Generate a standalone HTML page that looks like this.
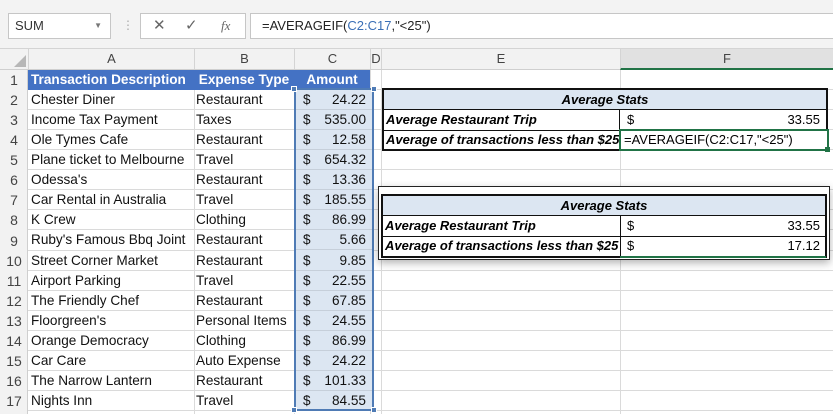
<!DOCTYPE html><html><head><style>
body{margin:0;width:833px;height:414px;overflow:hidden;background:#fff;font-family:"Liberation Sans",sans-serif;position:relative}
.a{position:absolute;box-sizing:border-box;white-space:nowrap}
.t{font-size:13px;line-height:20px}
.d{font-size:13.6px}
</style></head><body>
<div class="a" style="left:0;top:0;width:833px;height:49px;background:#f3f3f3;border-bottom:1px solid #d4d4d4"></div>
<div class="a" style="left:8px;top:13px;width:103px;height:26px;background:#fff;border:1px solid #c6c6c6;font-size:13px;line-height:24px;padding-left:6px;color:#333">SUM<span style="position:absolute;right:8px;top:0;font-size:8px;color:#777">▼</span></div>
<div class="a" style="left:122px;top:18px;color:#aaa;font-size:12px">⋮</div>
<div class="a" style="left:140px;top:13px;width:106px;height:26px;background:#fff;border:1px solid #c6c6c6;font-size:15px;line-height:24px;color:#666"><span style="position:absolute;left:12px">✕</span><span style="position:absolute;left:44px">✓</span><span style="position:absolute;left:80px;font-family:'Liberation Serif';font-style:italic;font-size:13px">fx</span></div>
<div class="a" style="left:250px;top:13px;width:590px;height:26px;background:#fff;border:1px solid #c6c6c6;font-size:13px;line-height:24px;padding-left:11px;color:#222">=AVERAGEIF(<span style="color:#3a6fb6">C2:C17</span>,"&lt;25")</div>
<div class="a" style="left:0;top:49px;width:833px;height:21px;background:#f2f2f2;border-bottom:1px solid #cfcfcf"></div>
<div class="a" style="left:14px;top:55px;width:0;height:0;border-left:12px solid transparent;border-bottom:12px solid #b7b7b7"></div>
<div class="a t" style="left:28px;top:49px;width:166px;text-align:center;border-left:1px solid #d4d4d4;color:#444">A</div>
<div class="a t" style="left:194px;top:49px;width:100px;text-align:center;border-left:1px solid #d4d4d4;color:#444">B</div>
<div class="a t" style="left:294px;top:49px;width:76px;text-align:center;border-left:1px solid #d4d4d4;color:#444">C</div>
<div class="a t" style="left:370px;top:49px;width:11px;text-align:center;border-left:1px solid #d4d4d4;color:#444">D</div>
<div class="a t" style="left:381px;top:49px;width:239px;text-align:center;border-left:1px solid #d4d4d4;color:#444">E</div>
<div class="a t" style="left:620px;top:49px;width:213px;text-align:center;border-left:1px solid #d4d4d4;color:#444;background:#e1e1e1;border-bottom:2px solid #217346;height:21px">F</div>
<div class="a" style="left:0;top:70px;width:28px;height:344px;background:#f2f2f2;border-right:1px solid #cfcfcf"></div>
<div id="g"></div>
<script>
var rows=[["Chester Diner","Restaurant","24.22"],["Income Tax Payment","Taxes","535.00"],["Ole Tymes Cafe","Restaurant","12.58"],["Plane ticket to Melbourne","Travel","654.32"],["Odessa's","Restaurant","13.36"],["Car Rental in Australia","Travel","185.55"],["K Crew","Clothing","86.99"],["Ruby's Famous Bbq Joint","Restaurant","5.66"],["Street Corner Market","Restaurant","9.85"],["Airport Parking","Travel","22.55"],["The Friendly Chef","Restaurant","67.85"],["Floorgreen's","Personal Items","24.55"],["Orange Democracy","Clothing","86.99"],["Car Care","Auto Expense","24.22"],["The Narrow Lantern","Restaurant","101.33"],["Nights Inn","Travel","84.55"]];
var h="";
for(var i=0;i<17;i++){var y=70+i*20.07;
h+='<div class="a" style="left:28px;top:'+(y+19)+'px;width:805px;height:1px;background:#dadada"></div>';
h+='<div class="a t" style="left:0;top:'+y+'px;width:28px;text-align:center;color:#444;font-size:14px">'+(i+1)+'</div>';}
[194,294,370,381,620].forEach(function(x){h+='<div class="a" style="left:'+x+'px;top:70px;width:1px;height:344px;background:#dadada"></div>'});
h+='<div class="a" style="left:28px;top:70px;width:342px;height:20px;background:#4472c4"></div>';
h+='<div class="a t d" style="left:31px;top:70px;color:#fff;font-weight:bold">Transaction Description</div>';
h+='<div class="a t d" style="left:194px;top:70px;width:100px;text-align:center;color:#fff;font-weight:bold">Expense Type</div>';
h+='<div class="a t d" style="left:294px;top:70px;width:76px;text-align:center;color:#fff;font-weight:bold">Amount</div>';
h+='<div class="a" style="left:294px;top:89px;width:79px;height:322px;background:#dce6f2"></div>';
for(var i=0;i<16;i++){var y=90+i*20.07;var r=rows[i];
h+='<div class="a" style="left:294px;top:'+(y+19)+'px;width:79px;height:1px;background:#c6cfda"></div>';
h+='<div class="a t d" style="left:31px;top:'+y+'px;color:#111">'+r[0]+'</div>';
h+='<div class="a t d" style="left:196px;top:'+y+'px;color:#111">'+r[1]+'</div>';
h+='<div class="a t d" style="left:303px;top:'+y+'px;color:#111">$</div>';
h+='<div class="a t d" style="left:300px;top:'+y+'px;width:66px;text-align:right;color:#111">'+r[2]+'</div>';}
document.getElementById("g").innerHTML=h;
</script>
<div class="a" style="left:294px;top:88px;width:80px;height:323px;border:2px solid #4f7bb5"></div>
<div class="a" style="left:291px;top:86px;width:6px;height:6px;background:#4f7bb5;border:1px solid #fff"></div>
<div class="a" style="left:371px;top:86px;width:6px;height:6px;background:#4f7bb5;border:1px solid #fff"></div>
<div class="a" style="left:291px;top:407px;width:6px;height:6px;background:#4f7bb5;border:1px solid #fff"></div>
<div class="a" style="left:371px;top:407px;width:6px;height:6px;background:#4f7bb5;border:1px solid #fff"></div>
<div class="a" style="left:382px;top:88px;width:446px;height:63px;border:2px solid #111;background:#fff"></div>
<div class="a t" style="left:384px;top:90px;width:442px;height:20px;background:#dce6f2;border-bottom:1px solid #111;text-align:center;font-weight:bold;font-style:italic">Average Stats</div>
<div class="a" style="left:384px;top:130px;width:442px;height:1px;background:#111"></div>
<div class="a" style="left:619px;top:110px;width:1px;height:39px;background:#111"></div>
<div class="a t" style="left:386px;top:110px;font-weight:bold;font-style:italic">Average Restaurant Trip</div>
<div class="a t" style="left:386px;top:130px;font-weight:bold;font-style:italic">Average of transactions less than $25</div>
<div class="a t" style="left:627px;top:110px">$</div>
<div class="a t" style="left:620px;top:110px;width:200px;text-align:right">33.55</div>
<div class="a t" style="left:619px;top:129px;width:210px;height:22px;border:2px solid #217346;padding-left:3px;line-height:18px;background:#fff">=AVERAGEIF(C2:C17,"&lt;25")</div>
<div class="a" style="left:825px;top:147px;width:5px;height:5px;background:#217346"></div>
<div class="a" style="left:378px;top:186px;width:452px;height:74px;border:1px solid #222;background:#fff;box-shadow:0 3px 8px rgba(0,0,0,.3)"></div>
<div class="a" style="left:381px;top:194px;width:446px;height:64px;border:2px solid #111"></div>
<div class="a t" style="left:383px;top:196px;width:442px;height:20px;background:#dce6f2;border-bottom:1px solid #111;text-align:center;font-weight:bold;font-style:italic">Average Stats</div>
<div class="a" style="left:383px;top:236px;width:442px;height:1px;background:#111"></div>
<div class="a" style="left:620px;top:216px;width:1px;height:40px;background:#111"></div>
<div class="a t" style="left:385px;top:216px;font-weight:bold;font-style:italic">Average Restaurant Trip</div>
<div class="a t" style="left:385px;top:236px;font-weight:bold;font-style:italic">Average of transactions less than $25</div>
<div class="a t" style="left:627px;top:216px">$</div>
<div class="a t" style="left:620px;top:216px;width:200px;text-align:right">33.55</div>
<div class="a t" style="left:627px;top:236px">$</div>
<div class="a t" style="left:620px;top:236px;width:200px;text-align:right">17.12</div>
<div class="a" style="left:620px;top:256px;width:206px;height:2px;background:#217346"></div>
</body></html>
